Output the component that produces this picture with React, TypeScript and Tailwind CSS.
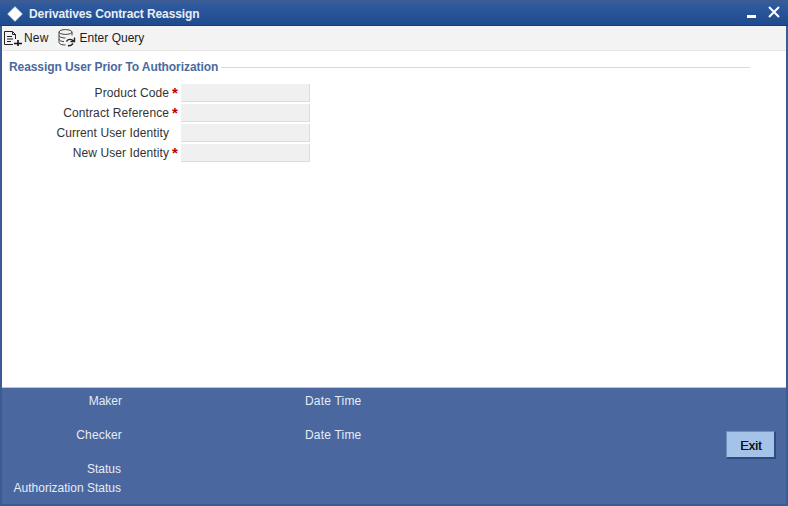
import React from 'react';

const fields = [
  { label: 'Product Code', required: true },
  { label: 'Contract Reference', required: true },
  { label: 'Current User Identity', required: false },
  { label: 'New User Identity', required: true },
];

function NewIcon() {
  return (
    <svg width="18" height="16" viewBox="0 0 18 16" fill="none" stroke="#222" strokeWidth="1" className="block">
      <path d="M0.5 14.5V1.5H8.5L11.5 4.5V9" />
      <path d="M8.5 1.5V4.5H11.5" />
      <path d="M0.5 14.5H9" />
      <path d="M3 6.5H8M3 9H9M3 11.5H7" />
      <path d="M10 13.5H18M14 10V16" strokeWidth="1.6" stroke="#111" />
    </svg>
  );
}

function QueryIcon() {
  return (
    <svg width="18" height="18" viewBox="0 0 18 18" fill="none" stroke="#444" strokeWidth="1" className="block">
      <ellipse cx="7.5" cy="3" rx="6.5" ry="2.4" />
      <path d="M1 3V13.5C1 15 4 16 7.5 16" />
      <path d="M14 3V6.5" />
      <path d="M1 6.5C1 8 4 9 7.5 9M1 10C1 11.4 3 12.4 6 12.6" />
      <path d="M8.5 12.5C9.5 10 13.5 9.5 15.5 12M16.5 8.5V12.5H12.5M10 16.5C12 17 14 16 15 14.5" stroke="#222" strokeWidth="1.4" />
    </svg>
  );
}

export default function App() {
  return (
    <div className="flex flex-col w-[788px] h-[506px] overflow-hidden bg-white text-[12px] leading-[14px] font-['Liberation_Sans',Arial,sans-serif]">
      {/* Title bar */}
      <div className="flex items-center shrink-0 h-[26px] pl-[7px] pr-[8px] border-t-[3px] border-b border-t-[#3a5b94] border-b-[#1c3a70] bg-gradient-to-b from-[#2f5c9f] to-[#1f4b8e]">
        <svg width="16" height="16" viewBox="0 0 16 16" className="block shrink-0">
          <path d="M8 0.5L15.5 8L8 15.5L0.5 8Z" fill="#fff" stroke="#9db4d6" strokeWidth="0.5" />
        </svg>
        <span className="ml-[6px] text-[12px] font-bold tracking-[-0.1px] text-[#e8eef8]">Derivatives Contract Reassign</span>
        <div className="ml-auto flex items-start">
          <div className="w-[9px] h-[3px] mt-[8px] mr-[12px] bg-white" />
          <svg width="12" height="12" viewBox="0 0 12 12" className="block -mt-[1px] mb-[3px]" stroke="#fff" strokeWidth="2" fill="none">
            <path d="M1 1L11 11M11 1L1 11" />
          </svg>
        </div>
      </div>

      <div className="flex flex-col flex-1 min-h-0 border-l-2 border-r-2 border-[#3a5b94]">
        {/* Toolbar */}
        <div className="flex items-center shrink-0 h-[25px] pl-[2px] bg-[#f3f3f3] border-b border-[#e8e8e8] text-[#1c1c1c]">
          <NewIcon />
          <span className="ml-[2px] tracking-[0.2px]">New</span>
          <span className="ml-[9px]"><QueryIcon /></span>
          <span className="ml-[4px]">Enter Query</span>
        </div>

        {/* Form */}
        <div className="flex-1 min-h-0 bg-white">
          <div className="flex items-center mt-[9px] ml-[7px] w-[741px]">
            <span className="font-bold tracking-[-0.08px] text-[#4a6a9c]">Reassign User Prior To Authorization</span>
            <div className="flex-1 ml-[3px] h-px bg-[#d0dae6]" />
          </div>
          <div className="flex flex-col gap-[2px] mt-[10px]">
            {fields.map((f) => (
              <div key={f.label} className="flex items-start h-[18px]">
                <label className="w-[167px] mt-[2px] text-right tracking-[0.09px] text-[#333]">{f.label}</label>
                <span className="w-[12px] mt-[2px] pl-[3px] text-[15px] font-bold text-[#c00000]">{f.required ? '*' : ''}</span>
                <div className="w-[129px] h-[18px] bg-[#f0f0f0] border-r border-b border-[#dcdcdc]" />
              </div>
            ))}
          </div>
        </div>

        {/* Audit footer */}
        <div className="relative shrink-0 h-[117px] border-t border-[#b9c5da] bg-[#4a679f] text-[#e6ecf6]">
          <div className="grid grid-cols-[120px_182px_auto] grid-rows-[17px_17px] gap-y-[17px] pt-[6px]">
            <span className="text-right">Maker</span>
            <span />
            <span className="ml-[1px] tracking-[0.2px]">Date Time</span>
            <span className="text-right tracking-[0.15px]">Checker</span>
            <span />
            <span className="ml-[1px] tracking-[0.2px]">Date Time</span>
          </div>
          <div className="flex flex-col items-end w-[119px] mt-[17px]">
            <span>Status</span>
            <span className="mt-[5px]">Authorization Status</span>
          </div>
          <button className="absolute left-[724px] top-[43px] w-[50px] h-[28px] pt-[2px] pl-[1px] bg-[#a5c3e8] border-t border-l border-[#6f8fbd] border-r-2 border-b-2 border-r-[#2f4a7c] border-b-[#2f4a7c] text-[13px] text-[#111] [text-shadow:0_0_0.4px_#111]">
            Exit
          </button>
        </div>
      </div>
      <div className="shrink-0 h-[2px] bg-[#3a5b94]" />
    </div>
  );
}
